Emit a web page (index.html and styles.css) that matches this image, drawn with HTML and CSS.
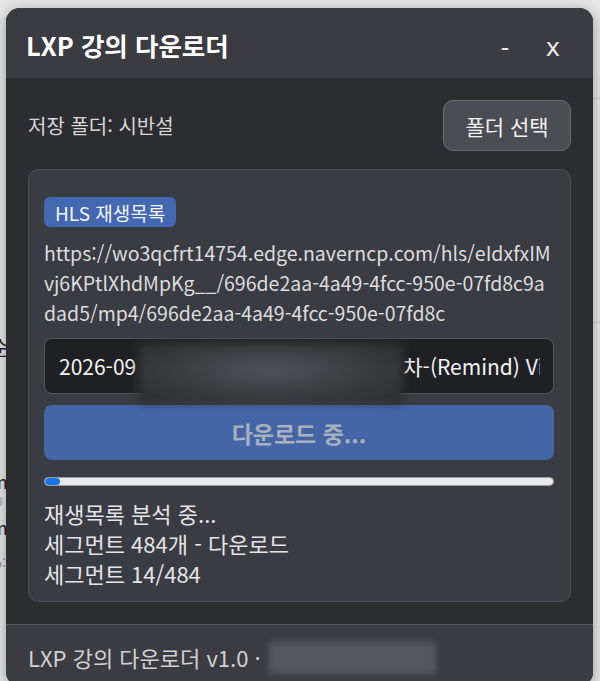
FILE: index.html
```html
<!DOCTYPE html>
<html lang="ko">
<head>
<meta charset="utf-8">
<title>LXP 강의 다운로더</title>
<link rel="stylesheet" href="styles.css">
</head>
<body>
<div class="desktop">
  <div class="behind">
    <span class="frag f1">순</span>
    <span class="frag f2">m</span>
    <span class="frag f3">8</span>
    <span class="frag f4">m</span>
    <span class="frag f5">o:</span>
    <span class="hline l1"></span>
    <span class="hline l2"></span>
  </div>
  <div class="window">
    <header class="titlebar">
      <h1 class="title">LXP 강의 다운로더</h1>
      <div class="controls">
        <span class="ctrl">-</span>
        <span class="ctrl">x</span>
      </div>
    </header>
    <main class="content">
      <div class="folder-row">
        <span class="folder-label">저장 폴더: 시반설</span>
        <button class="folder-btn">폴더 선택</button>
      </div>
      <section class="card">
        <span class="badge">HLS 재생목록</span>
        <div class="url">
          <span class="url-line">https://wo3qcfrt14754.edge.naverncp.com/hls/eIdxfxIM</span>
          <span class="url-line">vj6KPtlXhdMpKg__/696de2aa-4a49-4fcc-950e-07fd8c9a</span>
          <span class="url-line">dad5/mp4/696de2aa-4a49-4fcc-950e-07fd8c</span>
        </div>
        <div class="input-wrap">
          <div class="input"><div class="input-text"><span>2026-09</span><span class="hidden-part"></span><span>차-(Remind) Video</span></div></div>
          <div class="blur blur-input"></div>
        </div>
        <button class="dl-btn">다운로드 중...</button>
        <div class="progress"><div class="fill" style="width:2.9%"></div></div>
        <div class="status">
          <div>재생목록 분석 중...</div>
          <div>세그먼트 484개 - 다운로드</div>
          <div>세그먼트 14/484</div>
        </div>
      </section>
    </main>
    <footer class="footer">
      <span>LXP 강의 다운로더 v1.0 · </span>
      <span class="blur blur-footer"></span>
    </footer>
  </div>
</div>
</body>
</html>
```

FILE: styles.css
```css
* { box-sizing: border-box; }

html, body {
  margin: 0;
  padding: 0;
}

body {
  width: 600px;
  height: 681px;
  overflow: hidden;
  background: #e6e6e7;
  font-family: "Noto Sans CJK KR", "Noto Sans", sans-serif;
}

.desktop {
  position: relative;
  width: 600px;
  height: 681px;
}

.behind {
  position: absolute;
  inset: 0;
}

.frag {
  position: absolute;
  left: -9px;
  font-size: 18px;
  line-height: 1;
  color: #222;
}
.f1 { top: 338px; font-size: 20px; }
.f2 { top: 472px; }
.f3 { top: 495px; color: #999; font-size: 12px; left: -4px; }
.f4 { top: 518px; }
.f5 { top: 556px; color: #7b8ba0; font-size: 13px; left: -6px; }

.hline {
  position: absolute;
  right: 0;
  width: 10px;
  height: 1px;
  background: #cfcfd1;
}
.l1 { top: 98px; }
.l2 { top: 322px; }

.window {
  position: absolute;
  left: 6px;
  top: 8px;
  width: 587px;
  height: 678px;
  border-radius: 14px;
  background: #2b2d31;
  overflow: hidden;
  box-shadow: 0 3px 14px rgba(0, 0, 0, 0.35);
  display: flex;
  flex-direction: column;
}

.titlebar {
  height: 70px;
  flex: none;
  background: #3a3c42;
  display: flex;
  align-items: center;
  justify-content: space-between;
  padding: 2px 25px 0 20px;
}

.title {
  margin: 0;
  font-size: 25.5px;
  font-weight: 700;
  color: #ffffff;
}

.controls {
  display: flex;
  gap: 18px;
  align-items: center;
  padding-top: 4px;
}

.ctrl {
  width: 30px;
  text-align: center;
  color: #e8e8e8;
  font-size: 26px;
  line-height: 1;
  font-family: "Noto Sans", sans-serif;
}

.content {
  padding: 22px 22px 22px;
  flex: none;
}

.folder-row {
  display: flex;
  align-items: center;
  justify-content: space-between;
  height: 51px;
}

.folder-label {
  font-size: 20px;
  color: #d6d6d8;
}

.folder-btn {
  width: 128px;
  height: 51px;
  border-radius: 10px;
  background: #4a4d53;
  border: 1px solid #6c6f75;
  color: #f2f2f2;
  font-family: inherit;
  font-size: 21px;
  padding: 0;
}

.card {
  margin-top: 18px;
  border: 1px solid #4b4e56;
  border-radius: 10px;
  background: #3a3c43;
  padding: 27px 16px 13px 15px;
  display: flex;
  flex-direction: column;
  align-items: flex-start;
}

.badge {
  height: 30px;
  display: inline-flex;
  align-items: center;
  padding: 0 11px;
  border-radius: 6px;
  background: #4467b1;
  color: #f4f6fb;
  font-size: 19px;
}

.url {
  margin-top: 11px;
  display: flex;
  flex-direction: column;
  font-size: 19.5px;
  line-height: 30px;
  color: #dcdcde;
}

.url-line {
  white-space: nowrap;
}

.input-wrap {
  position: relative;
  margin-top: 10px;
  width: 100%;
}

.input {
  height: 56px;
  width: 100%;
  border: 1px solid #55585f;
  border-radius: 8px;
  background: #1f2023;
  color: #f2f2f2;
  font-size: 21px;
  padding: 0 13px 0 14px;
  display: flex;
  align-items: center;
}

.input-text {
  width: 100%;
  white-space: nowrap;
  overflow: hidden;
  display: flex;
}

.hidden-part {
  display: inline-block;
  width: 267px;
  flex: none;
}

.blur {
  display: inline-block;
  filter: blur(4px);
}

.blur-input {
  position: absolute;
  left: 94px;
  top: 5px;
  width: 265px;
  height: 60px;
  background: radial-gradient(ellipse at 50% 45%, #525358 0%, #3d3e42 45%, #2a2b2e 100%);
}

.dl-btn {
  margin-top: 11px;
  width: 100%;
  height: 55px;
  border: none;
  border-radius: 8px;
  background: #4566a6;
  color: #a8b0c0;
  font-family: inherit;
  font-size: 23px;
  font-weight: 700;
}

.progress {
  margin-top: 17px;
  width: 100%;
  height: 9px;
  border-radius: 5px;
  background: #e9e9eb;
  border: 1px solid #9a9ca2;
  overflow: hidden;
}

.fill {
  height: 100%;
  background: #1a73e8;
  border-radius: 5px;
}

.status {
  margin-top: 12px;
  font-size: 22px;
  line-height: 30px;
  color: #e4e4e6;
}

.footer {
  flex: 1;
  border-top: 1px solid #55575d;
  background: #3a3c42;
  padding: 17px 22px 0;
  font-size: 22px;
  line-height: 30px;
  color: #d0d0d2;
  display: flex;
  align-items: flex-start;
  white-space: pre;
}

.blur-footer {
  width: 167px;
  height: 32px;
  margin-top: 0;
  margin-left: 2px;
  background: #55575d;
  filter: blur(3px);
}
```
